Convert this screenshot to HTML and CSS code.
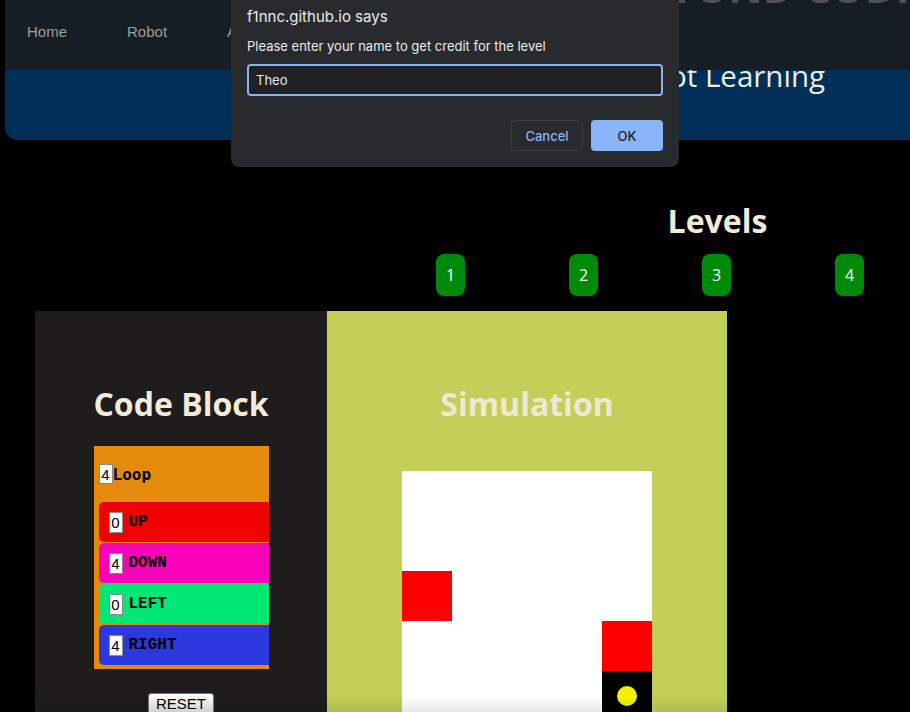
FILE: index.html
```html
<!DOCTYPE html>
<html lang="en">
<head>
<meta charset="utf-8">
<title>Levels</title>
<link rel="stylesheet" href="styles.css">
</head>
<body>
<div class="page">
  <header class="masthead">
    <nav class="topbar">
      <div class="brand">BEYOND CODING</div>
      <ul class="nav-links">
        <li>Home</li>
        <li>Robot</li>
        <li>About</li>
      </ul>
    </nav>
    <div class="hero">
      <p class="tagline">Robot Learning</p>
    </div>
  </header>

  <section class="levels">
    <h2 class="levels-title">Levels</h2>
    <div class="level-row">
      <button class="level-btn">1</button>
      <button class="level-btn">2</button>
      <button class="level-btn">3</button>
      <button class="level-btn">4</button>
    </div>
  </section>

  <main class="workspace">
    <section class="code-panel">
      <h2 class="panel-title">Code Block</h2>
      <div class="loop-block">
        <div class="loop-head">
          <input class="count" type="text" value="4"><span>Loop</span>
        </div>
        <div class="command cmd-up"><input class="count" type="text" value="0"><span>UP</span></div>
        <div class="command cmd-down"><input class="count" type="text" value="4"><span>DOWN</span></div>
        <div class="command cmd-left"><input class="count" type="text" value="0"><span>LEFT</span></div>
        <div class="command cmd-right"><input class="count" type="text" value="4"><span>RIGHT</span></div>
      </div>
      <button class="reset-btn">RESET</button>
    </section>

    <section class="sim-panel">
      <h2 class="panel-title sim-title">Simulation</h2>
      <div class="grid">
        <div class="cell"></div><div class="cell"></div><div class="cell"></div><div class="cell"></div><div class="cell"></div>
        <div class="cell"></div><div class="cell"></div><div class="cell"></div><div class="cell"></div><div class="cell"></div>
        <div class="cell wall"></div><div class="cell"></div><div class="cell"></div><div class="cell"></div><div class="cell"></div>
        <div class="cell"></div><div class="cell"></div><div class="cell"></div><div class="cell"></div><div class="cell wall"></div>
        <div class="cell"></div><div class="cell"></div><div class="cell"></div><div class="cell"></div><div class="cell robot"><span class="dot"></span></div>
      </div>
    </section>
  </main>
</div>

<div class="dialog">
  <div class="dialog-title">f1nnc.github.io says</div>
  <div class="dialog-msg">Please enter your name to get credit for the level</div>
  <input class="dialog-input" type="text" value="Theo">
  <div class="dialog-actions">
    <button class="btn-cancel">Cancel</button>
    <button class="btn-ok">OK</button>
  </div>
</div>

<div class="bottom-fade"></div>
</body>
</html>
```

FILE: styles.css
```css
html, body {
  margin: 0;
  height: 100%;
  overflow: hidden;
  background: #000;
}
body {
  font-family: "Open Sans", sans-serif;
}
.page {
  width: 1435px;
}

/* header */
.topbar {
  position: relative;
  z-index: 1;
  height: 70px;
  margin-left: 5px;
  background: #161d24;
  overflow: hidden;
}
.brand {
  margin-top: -34px;
  padding-left: 612px;
  font: 700 42px/42px "Open Sans", sans-serif;
  color: #4f5052;
  white-space: nowrap;
}
.nav-links {
  list-style: none;
  margin: 14px 0 0;
  padding: 0 0 0 22px;
  display: flex;
  gap: 60px;
  font: 15px/20px "Liberation Sans", Arial, sans-serif;
  color: #9d9d9d;
}
.hero {
  display: flow-root;
  margin-left: 5px;
  height: 70px;
  background: #00305a;
  border-bottom-left-radius: 13px;
}
.tagline {
  margin: -9px 0 0;
  text-align: center;
  font: 400 29.5px/30px "Open Sans", sans-serif;
  color: #f1ebd9;
}

/* levels */
.levels {
  padding-top: 59px;
}
.levels-title {
  margin: 0;
  text-align: center;
  font: 700 32px/44px "Open Sans", sans-serif;
  color: #f1ebd9;
}
.level-row {
  display: flex;
  gap: 104px;
  padding-left: 436px;
  margin-top: 11px;
}
.level-btn {
  width: 29px;
  height: 42px;
  border: 0;
  padding: 0;
  border-radius: 8px;
  background: #008a0a;
  color: #fff;
  font: 400 16px "Open Sans", sans-serif;
}

/* workspace */
.workspace {
  display: flex;
  margin: 15px 0 0 35px;
}
.code-panel, .sim-panel {
  box-sizing: border-box;
  height: 460px;
  padding-top: 71px;
  display: flex;
  flex-direction: column;
  align-items: center;
}
.code-panel {
  width: 292px;
  background: #1e1c1d;
}
.sim-panel {
  width: 400px;
  background: #c3cf59;
}
.panel-title {
  margin: 0;
  font: 700 32px/44px "Open Sans", sans-serif;
  color: #f1ebd9;
}
.sim-title {
  color: #efe9d3;
}

.loop-block {
  margin-top: 20px;
  width: 175px;
  box-sizing: border-box;
  padding: 0 0 3px 5px;
  background: #e68a0c;
  overflow: hidden;
}
.loop-head {
  height: 56px;
  display: flex;
  align-items: center;
  font: 700 16px "DejaVu Sans Mono", monospace;
  color: #000;
}
.loop-head .count {
  height: 20px;
}
.count {
  width: 14px;
  height: 21px;
  box-sizing: border-box;
  margin: 0;
  padding: 0;
  border: 1px solid #8a8a8a;
  background: #fff;
  color: #000;
  text-align: center;
  font: 15px "Liberation Sans", Arial, sans-serif;
}
.command {
  box-sizing: border-box;
  width: 190px;
  height: 40px;
  margin-bottom: 1px;
  border-radius: 5px;
  padding-left: 10px;
  display: flex;
  align-items: center;
  gap: 6px;
  font: 700 16px "Liberation Mono", "Courier New", monospace;
  color: #000;
}
.cmd-up { background: #f00000; }
.cmd-down { background: #fd00b9; }
.cmd-left { background: #00e874; }
.cmd-right { background: #2b38de; }

.reset-btn {
  margin-top: 24px;
  padding: 1px 7px;
  border: 1px solid #767676;
  border-radius: 3px;
  background: linear-gradient(#fdfdfd, #e4e4e4);
  color: #000;
  font: 15px/18px "Liberation Sans", Arial, sans-serif;
}

.grid {
  margin-top: 45px;
  display: grid;
  grid-template-columns: repeat(5, 50px);
  grid-auto-rows: 50px;
  background: #fff;
}
.cell.wall { background: #ff0000; }
.cell.robot {
  background: #000;
  display: flex;
  align-items: center;
  justify-content: center;
}
.dot {
  width: 20px;
  height: 20px;
  border-radius: 50%;
  background: #f2f200;
}

/* dialog */
.dialog {
  position: fixed;
  top: 0;
  left: 231px;
  width: 448px;
  box-sizing: border-box;
  padding: 6px 16px 16px;
  background: #292a2d;
  border-radius: 0 0 8px 8px;
  color: #e8eaed;
  font-family: "Inter", "Roboto", sans-serif;
  z-index: 5;
}
.dialog-title {
  font-size: 15px;
  line-height: 22px;
}
.dialog-msg {
  margin-top: 9px;
  font-size: 13px;
  line-height: 18px;
}
.dialog-input {
  display: block;
  margin-top: 9px;
  width: 100%;
  height: 32px;
  box-sizing: border-box;
  border: 2px solid #8ab4f8;
  border-radius: 4px;
  background: #202124;
  color: #e8eaed;
  padding: 0 7px;
  font: 13px "Inter", "Roboto", sans-serif;
  outline: none;
}
.dialog-actions {
  margin-top: 24px;
  display: flex;
  justify-content: flex-end;
  gap: 8px;
}
.btn-cancel, .btn-ok {
  width: 72px;
  height: 31px;
  border-radius: 4px;
  font: 500 13px "Inter", "Roboto", sans-serif;
}
.btn-cancel {
  border: 1px solid #3c3e42;
  background: transparent;
  color: #8ab4f8;
}
.btn-ok {
  border: 0;
  background: #8ab4f8;
  color: #202124;
}

.bottom-fade {
  position: fixed;
  left: 0;
  right: 0;
  bottom: 0;
  height: 16px;
  background: linear-gradient(rgba(0,0,0,0), rgba(0,0,0,0.09));
  pointer-events: none;
}
```
